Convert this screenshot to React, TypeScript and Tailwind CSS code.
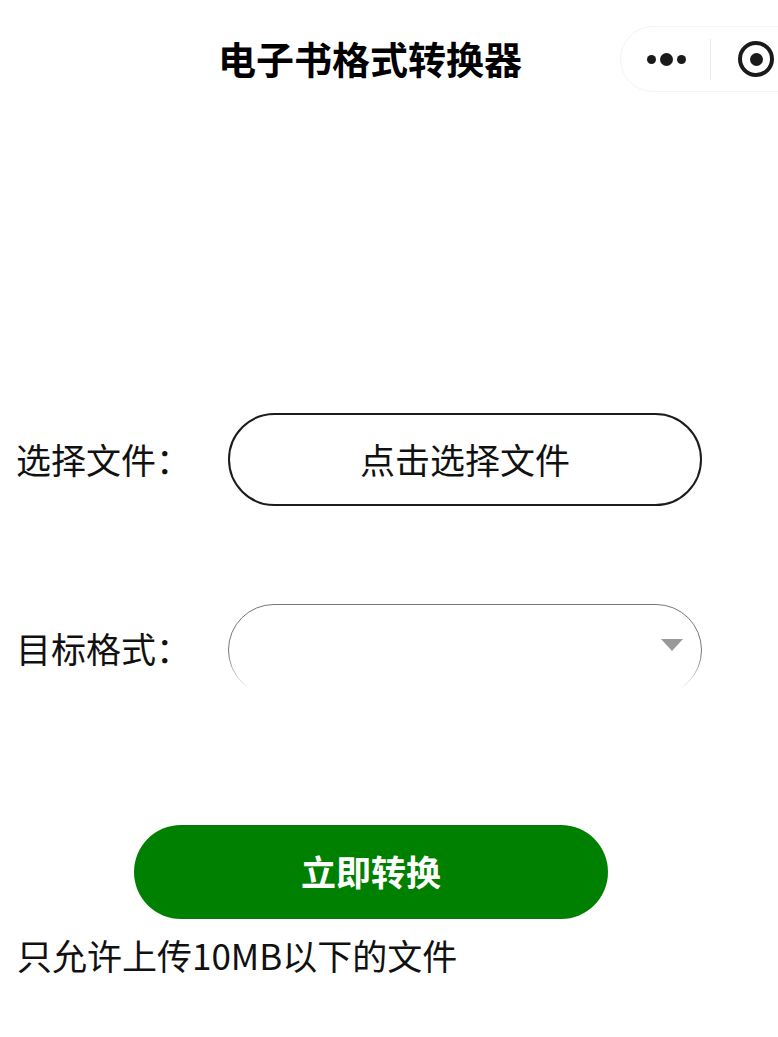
export default function App() {
  return (
    <div className="h-[1037px] w-[778px] overflow-hidden bg-white text-[#111] font-['Noto_Sans_CJK_SC','Noto_Sans',sans-serif]">
      {/* Mini program nav bar */}
      <header className="relative flex h-[120px] items-center justify-center pb-[4px] pr-[38px]">
        <h1 className="text-[38px] font-bold leading-none text-black">电子书格式转换器</h1>
        <div className="absolute left-[620px] top-[26px] flex h-[66px] w-[180px] items-center rounded-l-[33px] border border-[#f4f4f4]">
          <div className="ml-[26px] flex items-center gap-[4px]">
            <span className="h-[9px] w-[9px] rounded-full bg-[#1a1a1a]" />
            <span className="h-[13px] w-[13px] rounded-full bg-[#1a1a1a]" />
            <span className="h-[9px] w-[9px] rounded-full bg-[#1a1a1a]" />
          </div>
          <div className="ml-[24px] h-[41px] w-px bg-[#e8e8e8]" />
          <div className="ml-[27px] flex h-[36px] w-[36px] items-center justify-center rounded-full border-[4px] border-[#1a1a1a]">
            <span className="h-[13px] w-[13px] rounded-full bg-[#1a1a1a]" />
          </div>
        </div>
      </header>

      <main className="flex flex-col pt-[293px]">
        <div className="flex items-center">
          <label className="w-[228px] pb-[2px] pl-[16px] text-[35px] leading-none">选择文件：</label>
          <button className="flex h-[93px] w-[474px] items-center justify-center rounded-[47px] border-2 border-[#1c1c1c] pb-[2px] text-[35px] leading-none">
            点击选择文件
          </button>
        </div>

        <div className="mt-[98px] flex items-start">
          <label className="flex h-[86px] w-[228px] items-center pl-[16px] text-[35px] leading-none">目标格式：</label>
          {/* select is cut off at the bottom by its wrapper */}
          <div className="relative h-[86px] w-[474px] overflow-hidden">
            <div className="relative h-[92px] w-full rounded-[46px] border border-[#777]">
              <svg className="absolute right-[18px] top-[34px]" width="22" height="12" viewBox="0 0 22 12">
                <path d="M0 0H22L11 12Z" fill="#999" />
              </svg>
            </div>
            <div className="absolute inset-x-0 bottom-0 h-[36px] bg-gradient-to-b from-transparent to-white" />
          </div>
        </div>

        <button className="ml-[134px] mt-[135px] flex h-[94px] w-[474px] items-center justify-center rounded-[47px] bg-[#008000] pb-[4px] text-[35px] font-bold leading-none text-white">
          立即转换
        </button>

        <p className="mt-[17px] pl-[17px] text-[35px] leading-[38px]">只允许上传10MB以下的文件</p>
      </main>
    </div>
  );
}
